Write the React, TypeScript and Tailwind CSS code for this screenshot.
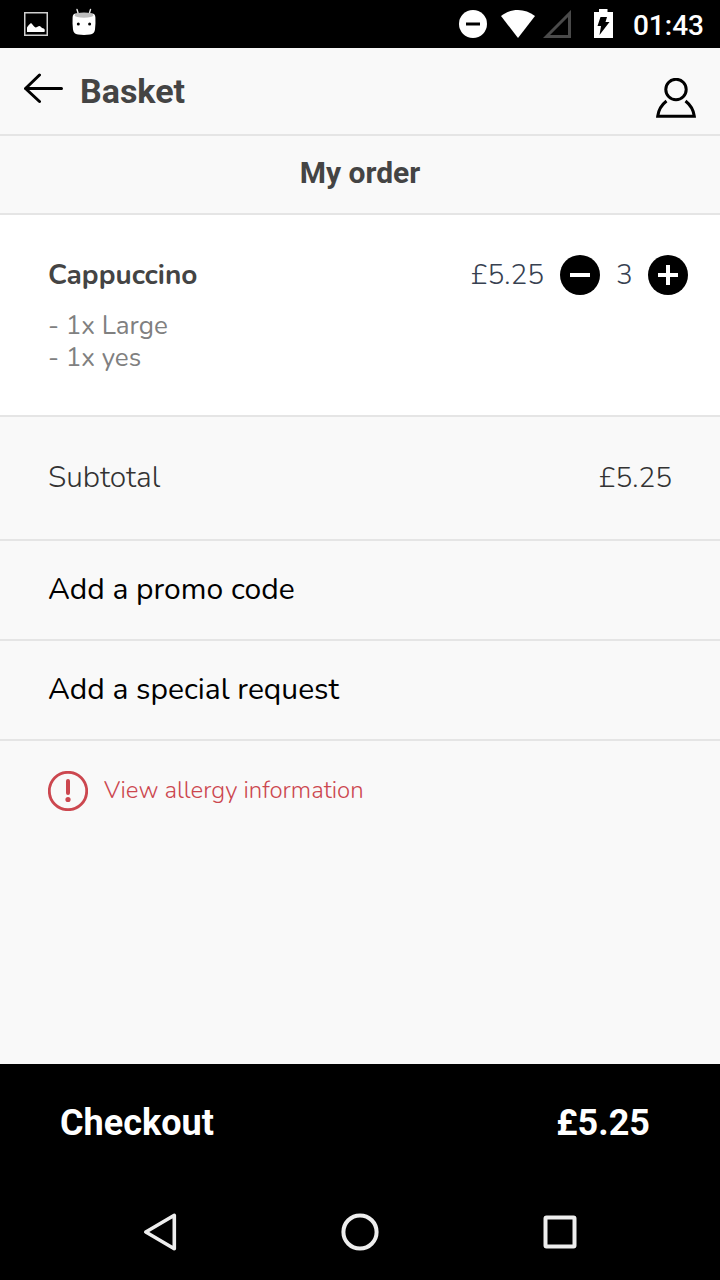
import { useState, type ReactNode } from 'react';

interface BasketItem {
  name: string;
  price: string;
  quantity: number;
  options: string[];
}

const ITEMS: BasketItem[] = [
  { name: 'Cappuccino', price: '£5.25', quantity: 3, options: ['1x Large', '1x yes'] },
];

const TOTAL = '£5.25';

function StatusBar() {
  return (
    <div className="flex h-12 items-center justify-between bg-black pr-4 pl-6 text-white">
      <div className="flex items-center gap-6">
        <svg className="h-6 w-6" viewBox="0 0 24 24" fill="none" aria-hidden="true">
          <rect x="0.75" y="0.75" width="22.5" height="22.5" stroke="#d0d0d0" strokeWidth="1.5" />
          <path d="M3 20v-4.500c1-2 2.500-3 4-4.500 1.500 1 2.500 3.500 4.500 4.500 1.500 0 2.500-1.500 4-1.500 1.500.5 2 2 3.500 2.300 1 .2 1.800 1 1.800 2L20.500 20z" fill="white" />
        </svg>
        <svg className="h-8 w-6" viewBox="0 0 24 32" fill="none" aria-hidden="true">
          <path d="M5 1.500l1.500 5M18.500 1.500L17 6.500" stroke="#e8e8e8" strokeWidth="1.400" strokeLinecap="round" />
          <path
            d="M4 5.500h16c2.200 0 3.300 1.500 3.400 4 .2 4 .1 8-.4 12-.4 3-2 4.800-5 5.100-4 .4-8 .4-12 0-3-.3-4.600-2.100-5-5.100-.5-4-.6-8-.4-12C.7 7 1.800 5.500 4 5.500z"
            fill="white"
          />
          <ellipse cx="12" cy="7.200" rx="9.500" ry="2.600" fill="#bdbdbd" />
          <circle cx="6.300" cy="16" r="1.500" fill="black" />
          <circle cx="17.600" cy="16" r="1.500" fill="black" />
        </svg>
      </div>

      <div className="flex items-center">
        <svg className="h-7 w-7" viewBox="0 0 28 28" aria-hidden="true">
          <circle cx="14" cy="14" r="14" fill="white" />
          <path d="M7 14h14" stroke="black" strokeWidth="3" />
        </svg>
        <svg className="ml-3.5 h-7 w-[34px]" viewBox="0 0 34 28" aria-hidden="true">
          <path d="M0 6C10-2 24-2 34 6L17 28z" fill="white" />
        </svg>
        <svg className="ml-2 h-7 w-7" viewBox="0 0 28 28" fill="none" aria-hidden="true">
          <path d="M26.500 3.500v23H3.500z" stroke="#4a4a4a" strokeWidth="3" />
        </svg>
        <svg className="ml-[22px] h-[30px] w-5" viewBox="0 0 20 30" aria-hidden="true">
          <path d="M6 0h8.500v3H20v26H1V3h5z" fill="white" />
          <path d="M7.500 8h6.500l-1.500 5H16.500L6.500 26l1.500-9H4.500z" fill="black" />
        </svg>
        <span className="ml-5 pt-1 text-[28px] leading-8 font-medium">01:43</span>
      </div>
    </div>
  );
}

function QuantityButton({
  label,
  path,
  onClick,
}: {
  label: string;
  path: string;
  onClick: () => void;
}) {
  return (
    <button type="button" aria-label={label} onClick={onClick} className="h-10 w-10 rounded-full bg-black">
      <svg className="h-10 w-10" viewBox="0 0 40 40" aria-hidden="true">
        <path d={path} stroke="white" strokeWidth="4" />
      </svg>
    </button>
  );
}

function OrderLine({ item }: { item: BasketItem }) {
  const [quantity, setQuantity] = useState(item.quantity);

  return (
    <li className="border-b-2 border-[#e5e5e5] bg-white pt-10 pr-8 pb-[41px] pl-12">
      <div className="flex h-10 items-center">
        <h3 className="flex-1 text-[28px] leading-8 font-bold text-[#444444]">{item.name}</h3>
        <span className="text-[28px] leading-8 text-[#374151]">{item.price}</span>
        <div className="ml-4 flex items-center gap-4">
          <QuantityButton
            label="Remove one"
            path="M10 20h20"
            onClick={() => setQuantity(Math.max(0, quantity - 1))}
          />
          <span className="w-4 text-center text-[28px] leading-8 text-[#374151]">{quantity}</span>
          <QuantityButton
            label="Add one"
            path="M10 20h20M20 10v20"
            onClick={() => setQuantity(quantity + 1)}
          />
        </div>
      </div>
      <ul className="mt-[15px] text-[26px] leading-8 font-normal text-[#808080]">
        {item.options.map((option) => (
          <li key={option}>- {option}</li>
        ))}
      </ul>
    </li>
  );
}

function RowButton({ children }: { children: ReactNode }) {
  return (
    <button
      type="button"
      className="block h-[100px] w-full border-b-2 border-[#e5e5e5] px-12 text-left text-[30px] leading-10 font-normal text-black"
    >
      {children}
    </button>
  );
}

function NavigationBar() {
  return (
    <nav className="flex h-24 items-center justify-center gap-40 bg-black">
      <button type="button" aria-label="Back">
        <svg className="h-10 w-10" viewBox="0 0 40 40" fill="none" aria-hidden="true">
          <path d="M34.300 3.300v33.400L5.800 20z" stroke="#eeeeee" strokeWidth="3.600" strokeLinejoin="round" />
        </svg>
      </button>
      <button type="button" aria-label="Home">
        <svg className="h-10 w-10" viewBox="0 0 40 40" fill="none" aria-hidden="true">
          <circle cx="20" cy="20" r="16.600" stroke="#eeeeee" strokeWidth="4" />
        </svg>
      </button>
      <button type="button" aria-label="Recent apps">
        <svg className="h-10 w-10" viewBox="0 0 40 40" fill="none" aria-hidden="true">
          <rect x="5.500" y="5.500" width="29" height="29" rx="1" stroke="#eeeeee" strokeWidth="4" />
        </svg>
      </button>
    </nav>
  );
}

export default function App() {
  return (
    <div className="flex min-h-screen flex-col bg-[#f9f9f9] font-['Roboto',sans-serif]">
      <StatusBar />

      <header className="flex h-[88px] items-center border-b-2 border-[#e5e5e5] px-6">
        <button type="button" aria-label="Go back" className="mb-1.5">
          <svg className="h-8 w-10" viewBox="0 0 40 32" fill="none" aria-hidden="true">
            <path
              d="M15.500 3L1.500 16.500l14 13M1.500 16.500H37.500"
              stroke="black"
              strokeWidth="3"
              strokeLinecap="round"
              strokeLinejoin="round"
            />
          </svg>
        </button>
        <h1 className="ml-4 flex-1 text-[34px] leading-10 font-bold text-[#444444]">Basket</h1>
        <button type="button" aria-label="Account" className="mt-3.5">
          <svg className="h-10 w-10" viewBox="0 0 40 40" fill="none" stroke="black" strokeWidth="3" aria-hidden="true">
            <circle cx="20" cy="11.500" r="10.200" />
            <path d="M10.500 23C6 26.500 2.500 31.500 1.700 38.300h36.600C37.500 31.500 34 26.500 29.500 23" />
          </svg>
        </button>
      </header>

      <main className="flex-1">
        <h2 className="border-b-2 border-[#e5e5e5] pt-[17px] pb-5 text-center text-[30px] leading-10 font-bold text-[#444444]">
          My order
        </h2>

        <div className="font-['Nunito',sans-serif] font-light">
          <ul>
            {ITEMS.map((item) => (
              <OrderLine key={item.name} item={item} />
            ))}
          </ul>
          <div className="flex h-[124px] items-center justify-between border-b-2 border-[#e5e5e5] px-12 leading-10 text-[#333333]">
            <span className="text-[30px]">Subtotal</span>
            <span className="text-[28px]">{TOTAL}</span>
          </div>
          <RowButton>Add a promo code</RowButton>
          <RowButton>Add a special request</RowButton>

          <a href="#allergy" className="flex items-center gap-4 px-12 py-[30px] text-[#cc474f]">
            <svg className="h-10 w-10" viewBox="0 0 40 40" fill="none" aria-hidden="true">
              <circle cx="20" cy="20" r="18.700" stroke="currentColor" strokeWidth="2.800" />
              <path d="M20 10v12" stroke="currentColor" strokeWidth="4" strokeLinecap="round" />
              <circle cx="20" cy="28.500" r="2.600" fill="currentColor" />
            </svg>
            <span className="pb-0.5 text-[24px] leading-8">View allergy information</span>
          </a>
        </div>
      </main>

      <button
        type="button"
        className="flex h-[120px] w-full items-center justify-between bg-black pr-[70px] pb-0.5 pl-[60px] text-[36px] leading-10 font-bold text-white"
      >
        <span>Checkout</span>
        <span>{TOTAL}</span>
      </button>
      <NavigationBar />
    </div>
  );
}
